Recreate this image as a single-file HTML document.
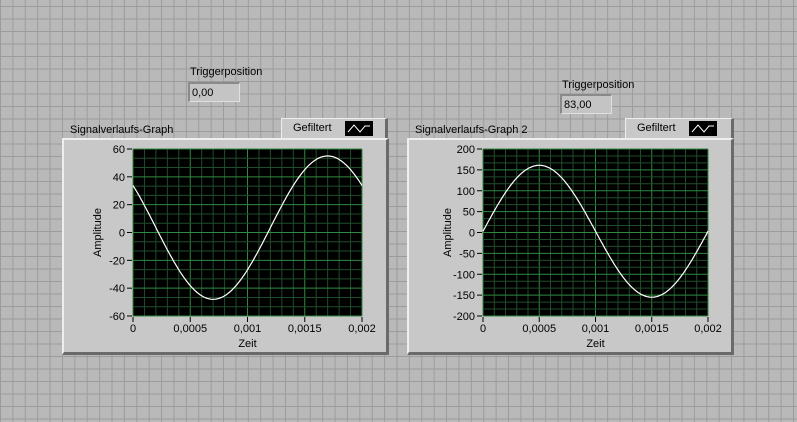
<!DOCTYPE html><html><head><meta charset="utf-8"><style>
body{margin:0;width:797px;height:422px;overflow:hidden;font-family:"Liberation Sans",sans-serif;font-size:11px;color:#000;
background-color:#b9b9b9;
background-image:linear-gradient(90deg,#9c9c9c 1px,transparent 1px),linear-gradient(#9c9c9c 1px,transparent 1px);
background-size:12.4px 12.5px;background-position:0px 6px;position:relative}
.a{position:absolute}
.num{background:#c4c4c4;border-top:2px solid #8a8a8a;border-left:2px solid #8a8a8a;border-bottom:1px solid #e0e0e0;border-right:1px solid #e0e0e0;box-sizing:border-box;padding:3px 0 0 2px}
.frame{background:#c8c8c8;border-top:2px solid #eee;border-left:2px solid #eee;border-right:3px solid #6a6a6a;border-bottom:3px solid #6a6a6a;box-sizing:border-box}
.leg{background:#c8c8c8;border-top:1px solid #eee;border-left:1px solid #eee;border-right:3px solid #6a6a6a;box-sizing:border-box}
</style></head><body>
<div class="a" style="left:190px;top:66px">Triggerposition</div>
<div class="a num" style="left:188px;top:82px;width:52px;height:20px">0,00</div>
<div class="a" style="left:562px;top:79px">Triggerposition</div>
<div class="a num" style="left:560px;top:94px;width:52px;height:20px">83,00</div>
<div class="a" style="left:70px;top:124px">Signalverlaufs-Graph</div>
<div class="a" style="left:415px;top:124px">Signalverlaufs-Graph 2</div>
<div class="a leg" style="left:281px;top:118px;width:107px;height:21px"><span class="a" style="left:11px;top:3px">Gefiltert</span>
<svg class="a" style="left:63px;top:2px" width="28" height="15"><rect width="28" height="15" fill="#000"/><polyline points="3,11 9,4 15,11 20,5 25,5" fill="none" stroke="#fff"/></svg></div>
<div class="a leg" style="left:625px;top:118px;width:109px;height:21px"><span class="a" style="left:11px;top:3px">Gefiltert</span>
<svg class="a" style="left:63px;top:2px" width="28" height="15"><rect width="28" height="15" fill="#000"/><polyline points="3,11 9,4 15,11 20,5 25,5" fill="none" stroke="#fff"/></svg></div>
<div class="a frame" style="left:62px;top:138px;width:327px;height:217px"></div>
<div class="a frame" style="left:407px;top:138px;width:327px;height:217px"></div>
<svg id="s" class="a" style="left:0;top:0" width="797" height="422"></svg>
<script>
var s=document.getElementById('s'),h='';
function g(x0,x1,y0,y1,ylabs,f){
 var w=x1-x0,H=y1-y0;
 h+='<rect x="'+x0+'" y="'+y0+'" width="'+w+'" height="'+H+'" fill="#000"/>';
 for(var i=0;i<=20;i++){var x=x0+w*i/20;h+='<line x1="'+x+'" x2="'+x+'" y1="'+y0+'" y2="'+y1+'" stroke="'+(i%5?'#1f4d2a':'#2f8a3f')+'" stroke-width="1"/>';}
 var n=ylabs.length-1,m=n*3;
 for(var i=0;i<=m;i++){var y=y0+H*i/m;h+='<line x1="'+x0+'" x2="'+x1+'" y1="'+y+'" y2="'+y+'" stroke="'+(i%3?'#1f4d2a':'#2f8a3f')+'"/>';}
 for(var i=0;i<=n;i++){var y=y0+H*i/n;h+='<line x1="'+(x0-6)+'" x2="'+(x0-1)+'" y1="'+y+'" y2="'+y+'" stroke="#000"/><text x="'+(x0-8)+'" y="'+(y+4)+'" text-anchor="end" font-size="11" font-family="Liberation Sans">'+ylabs[i]+'</text>';}
 var xl=['0','0,0005','0,001','0,0015','0,002'];
 for(var i=0;i<5;i++){var x=x0+w*i/4;h+='<line x1="'+x+'" x2="'+x+'" y1="'+(y1+1)+'" y2="'+(y1+6)+'" stroke="#000"/><text x="'+x+'" y="'+(y1+16)+'" text-anchor="middle" font-size="11" font-family="Liberation Sans">'+xl[i]+'</text>';}
 h+='<text x="'+(x0+w/2)+'" y="'+(y1+31)+'" text-anchor="middle" font-size="11" font-family="Liberation Sans">Zeit</text>';
 h+='<text transform="translate('+(x0-32)+','+(y0+H/2)+') rotate(-90)" text-anchor="middle" font-size="11" font-family="Liberation Sans">Amplitude</text>';
 var p='',lo=parseFloat(ylabs[n]),hi=parseFloat(ylabs[0]);
 for(var i=0;i<=200;i++){var t=0.002*i/200,v=f(t);p+=(x0+w*i/200).toFixed(1)+','+(y0+H*(hi-v)/(hi-lo)).toFixed(1)+' ';}
 h+='<polyline points="'+p+'" fill="none" stroke="#fff" stroke-width="1.2"/>';
}
g(133,362,149,316,['60','40','20','0','-20','-40','-60'],function(t){return 3.5+51.5*Math.cos(2*Math.PI*(t-0.0017)/0.002);});
g(483,708,149,316,['200','150','100','50','0','-50','-100','-150','-200'],function(t){return 3+158*Math.sin(2*Math.PI*t/0.002);});
s.innerHTML=h;
</script>
</body></html>
